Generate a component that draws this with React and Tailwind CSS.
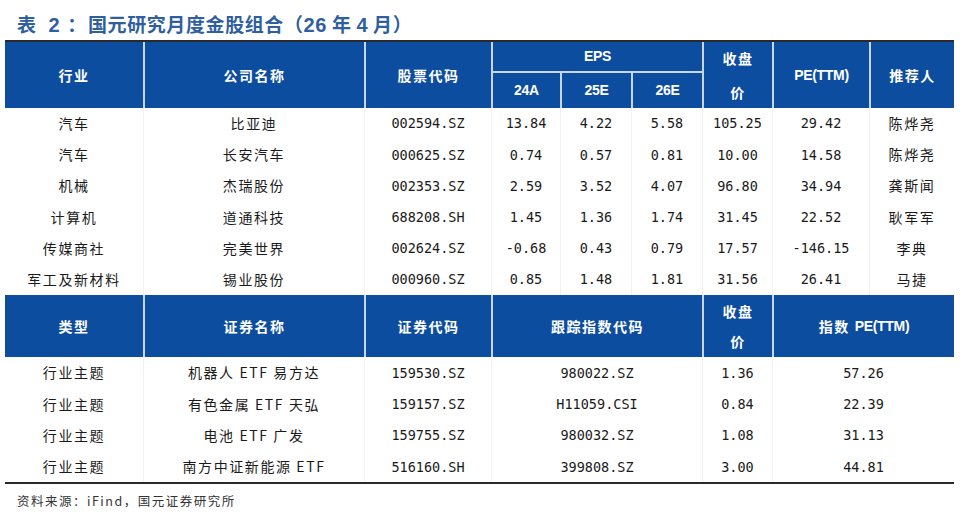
import React from "react";

const CN = "font-['Noto_Sans_CJK_SC',sans-serif]";
const NUM = "font-['DejaVu_Sans_Mono','Noto_Sans_CJK_SC',monospace]";
const HB = "bg-[#0c4d9f]";
const DIV = "border-l-2 border-[#c9d5e8]";

const rows1 = [
  ["汽车", "比亚迪", "002594.SZ", "13.84", "4.22", "5.58", "105.25", "29.42", "陈烨尧"],
  ["汽车", "长安汽车", "000625.SZ", "0.74", "0.57", "0.81", "10.00", "14.58", "陈烨尧"],
  ["机械", "杰瑞股份", "002353.SZ", "2.59", "3.52", "4.07", "96.80", "34.94", "龚斯闻"],
  ["计算机", "道通科技", "688208.SH", "1.45", "1.36", "1.74", "31.45", "22.52", "耿军军"],
  ["传媒商社", "完美世界", "002624.SZ", "-0.68", "0.43", "0.79", "17.57", "-146.15", "李典"],
  ["军工及新材料", "锡业股份", "000960.SZ", "0.85", "1.48", "1.81", "31.56", "26.41", "马捷"],
];

const rows2 = [
  ["行业主题", "机器人 ETF 易方达", "159530.SZ", "980022.SZ", "1.36", "57.26"],
  ["行业主题", "有色金属 ETF 天弘", "159157.SZ", "H11059.CSI", "0.84", "22.39"],
  ["行业主题", "电池 ETF 广发", "159755.SZ", "980032.SZ", "1.08", "31.13"],
  ["行业主题", "南方中证新能源 ETF", "516160.SH", "399808.SZ", "3.00", "44.81"],
];

function HCell({ children, className = "" }) {
  return (
    <div className={`flex items-center justify-center text-white font-bold text-[14px] tracking-[1.5px] ${CN} ${className}`}>
      {children}
    </div>
  );
}

function LatinH({ children }) {
  return <span className="font-['Liberation_Sans',sans-serif] font-bold text-[14px] tracking-[-0.3px]">{children}</span>;
}

function TD({ children, className = "" }) {
  return <span className={`font-['Liberation_Sans',sans-serif] font-bold text-[20px] ${className}`}>{children}</span>;
}

export default function App() {
  return (
    <div className="w-[960px] h-[522px] bg-white relative overflow-hidden">
      <div className={`h-[40px] pl-[17px] pt-[10px] text-[19px] font-bold leading-[28px] text-[#2f5f9f] tracking-[0.6px] whitespace-pre ${CN}`}>
        <span>表</span>
        <TD className="ml-[12px]">2</TD>
        <span className="ml-[7px]">：</span>
        <span className="ml-[1px]">国元研究月度金股组合（</span>
        <TD>26</TD> 年 <TD>4</TD> 月）
      </div>
      <div className="ml-[5px] w-[949px] border-t-2 border-[#2a2a2a]">
        {/* Header 1 */}
        <div className={`grid grid-cols-[138px_221px_127px_69px_71px_71px_70px_97px_85px] grid-rows-[31px_35px] ${HB}`}>
          <HCell className="row-span-2">行业</HCell>
          <HCell className={`row-span-2 ${DIV}`}>公司名称</HCell>
          <HCell className={`row-span-2 ${DIV}`}>股票代码</HCell>
          <HCell className={`col-span-3 ${DIV} border-b-2 border-b-[#c9d5e8]`}><LatinH>EPS</LatinH></HCell>
          <HCell className={`row-span-2 flex-col leading-[34px] ${DIV}`}>
            <span>收盘</span>
            <span>价</span>
          </HCell>
          <HCell className={`row-span-2 ${DIV}`}><LatinH>PE(TTM)</LatinH></HCell>
          <HCell className={`row-span-2 ${DIV}`}>推荐人</HCell>
          <HCell className={DIV}><LatinH>24A</LatinH></HCell>
          <HCell className={DIV}><LatinH>25E</LatinH></HCell>
          <HCell className={DIV}><LatinH>26E</LatinH></HCell>
        </div>
        {/* Data 1 */}
        {rows1.map((r, i) => (
          <div key={i} className="grid grid-cols-[138px_221px_127px_69px_71px_71px_70px_97px_85px] h-[31.2px] text-[#1a1a1a]">
            {r.map((c, j) => {
              const isCn = j === 0 || j === 1 || j === 8;
              return (
                <div
                  key={j}
                  className={`flex items-center justify-center ${j > 0 ? "border-l border-[#f1f1f1]" : ""} ${isCn ? `${CN} text-[14px] tracking-[1.6px]` : `${NUM} text-[13.5px]`}`}
                >
                  {c}
                </div>
              );
            })}
          </div>
        ))}
        {/* Header 2 */}
        <div className={`grid grid-cols-[138px_221px_127px_211px_70px_182px] h-[62px] ${HB}`}>
          <HCell>类型</HCell>
          <HCell className={DIV}>证券名称</HCell>
          <HCell className={DIV}>证券代码</HCell>
          <HCell className={DIV}>跟踪指数代码</HCell>
          <HCell className={`flex-col leading-[30px] ${DIV}`}>
            <span>收盘</span>
            <span>价</span>
          </HCell>
          <HCell className={DIV}>
            <span className="mr-[5px]">指数</span>
            <LatinH>PE(TTM)</LatinH>
          </HCell>
        </div>
        {/* Data 2 */}
        <div className="border-b-2 border-[#2a2a2a]">
          {rows2.map((r, i) => (
            <div key={i} className="grid grid-cols-[138px_221px_127px_211px_70px_182px] h-[31.3px] text-[#1a1a1a]">
              {r.map((c, j) => {
                const isCn = j === 0 || j === 1;
                return (
                  <div
                    key={j}
                    className={`flex items-center justify-center ${j > 0 ? "border-l border-[#f1f1f1]" : ""} ${isCn ? `${CN} text-[14px] tracking-[1.6px]` : `${NUM} text-[13.5px]`}`}
                  >
                    {c}
                  </div>
                );
              })}
            </div>
          ))}
        </div>
      </div>
      <div className={`pl-[17px] pt-[8px] text-[12.5px] tracking-[1.5px] text-[#333] ${CN}`}>
        资料来源：iFind，国元证券研究所
      </div>
    </div>
  );
}
